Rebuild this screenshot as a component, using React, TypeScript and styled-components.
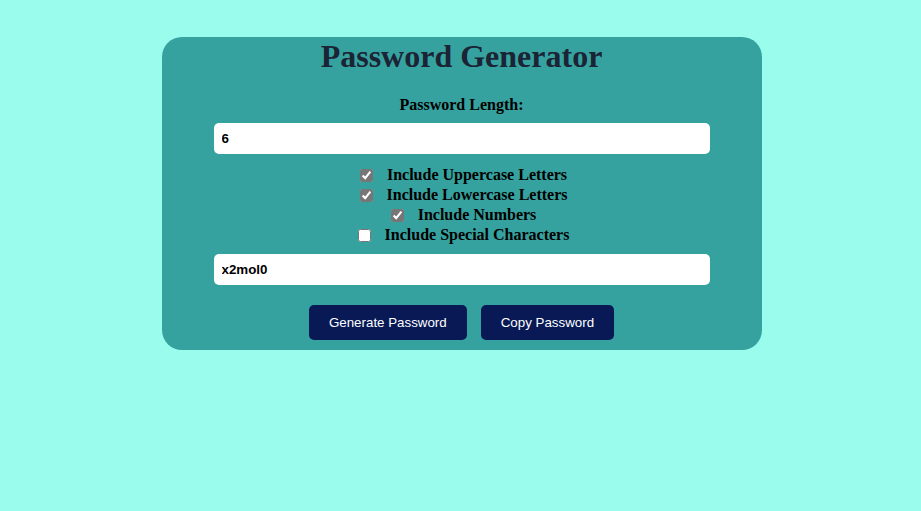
import React, { useState } from "react";
import styled, { createGlobalStyle } from "styled-components";

const Global = createGlobalStyle`
  html, body { margin: 0; padding: 0; background: #99fcec; }
  body { font-family: "Liberation Serif", "Times New Roman", serif; }
`;

const Page = styled.div`
  display: flex;
  justify-content: center;
  padding: 37px 0 0 2px;
`;

const Card = styled.div`
  width: 600px;
  box-sizing: border-box;
  background: #36a29f;
  border-radius: 20px;
  padding: 1px 0 10px;
  display: flex;
  flex-direction: column;
  align-items: center;
`;

const Title = styled.h1`
  margin: 0 0 21px;
  font-size: 32px;
  font-weight: bold;
  color: #1b2434;
  line-height: 37px;
`;

const Label = styled.div`
  font-size: 16px;
  font-weight: bold;
  color: #000;
  line-height: 18px;
  margin-bottom: 9px;
`;

const Field = styled.input`
  width: 496px;
  height: 31px;
  box-sizing: border-box;
  border: none;
  border-radius: 5px;
  background: #fff;
  padding: 0 8px;
  font-family: "Liberation Sans", Arial, sans-serif;
  font-size: 13.33px;
  font-weight: bold;
  color: #000;
  outline: none;
`;

const Options = styled.div`
  display: flex;
  flex-direction: column;
  align-items: center;
  margin: 11px 0 9px;
`;

const Row = styled.label`
  display: flex;
  align-items: center;
  height: 20px;
  font-size: 16px;
  font-weight: bold;
  color: #000;
`;

const Check = styled.input`
  width: 13px;
  height: 13px;
  margin: 0 14px 0 4px;
  accent-color: #767676;
`;

const Buttons = styled.div`
  display: flex;
  gap: 14px;
  margin-top: 20px;
`;

const Button = styled.button`
  height: 35px;
  padding: 0 20px;
  border: none;
  border-radius: 5px;
  background: #081955;
  color: #fff;
  font-family: "Liberation Sans", Arial, sans-serif;
  font-size: 13.33px;
  cursor: pointer;
`;

const options = [
  { label: "Include Uppercase Letters", checked: true },
  { label: "Include Lowercase Letters", checked: true },
  { label: "Include Numbers", checked: true },
  { label: "Include Special Characters", checked: false },
];

export default function App() {
  const [opts, setOpts] = useState(options.map((o) => o.checked));
  return (
    <>
      <Global />
      <Page>
        <Card>
          <Title>Password Generator</Title>
          <Label>Password Length:</Label>
          <Field type="text" defaultValue="6" />
          <Options>
            {options.map((o, i) => (
              <Row key={o.label}>
                <Check
                  type="checkbox"
                  checked={opts[i]}
                  onChange={() => setOpts(opts.map((v, j) => (j === i ? !v : v)))}
                />
                {o.label}
              </Row>
            ))}
          </Options>
          <Field type="text" defaultValue="x2mol0" readOnly />
          <Buttons>
            <Button>Generate Password</Button>
            <Button>Copy Password</Button>
          </Buttons>
        </Card>
      </Page>
    </>
  );
}
